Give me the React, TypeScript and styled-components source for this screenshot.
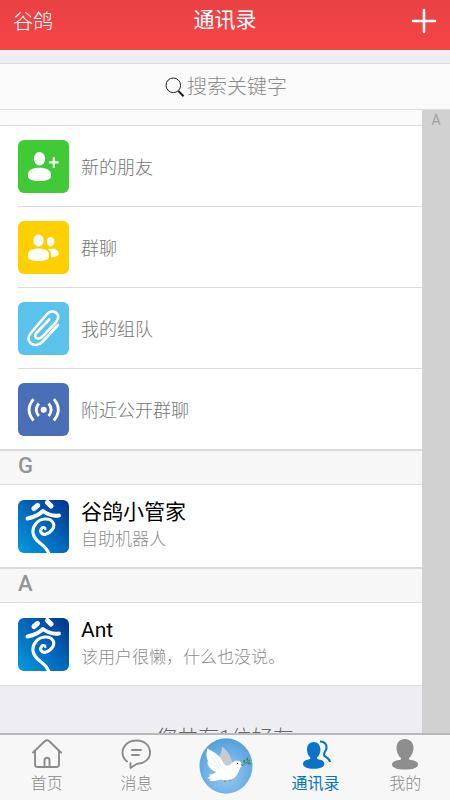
import React from "react";
import styled, { createGlobalStyle } from "styled-components";

const GlobalStyle = createGlobalStyle`
  * { box-sizing: border-box; }
  body {
    margin: 0;
    background: #eeedf2;
    font-family: Roboto, "Noto Sans CJK SC", sans-serif;
    font-weight: 300;
  }
  h1, h2, p, ul { margin: 0; padding: 0; font-weight: inherit; }
  ul { list-style: none; }
  button, input { font: inherit; border: 0; padding: 0; background: none; color: inherit; }
  button { cursor: pointer; }
  svg { display: block; flex: none; }
`;

const Screen = styled.div`
  height: 100vh;
  display: flex;
  flex-direction: column;
  overflow: hidden;
`;

const Header = styled.header`
  flex: none;
  height: 50px;
  padding: 0 13px 10px;
  display: grid;
  grid-template-columns: 1fr auto 1fr;
  align-items: center;
  color: #fff;
  background: linear-gradient(#e94144, #f44546);
`;

const Brand = styled.span`
  font-size: 20px;
  line-height: 24px;
  padding-top: 4px;
`;

const Title = styled.h1`
  font-size: 21px;
  line-height: 24px;
  font-weight: 400;
`;

const AddButton = styled.button`
  justify-self: end;
  padding-top: 2px;
`;

const SearchBar = styled.label`
  flex: none;
  height: 47px;
  margin-top: 13px;
  padding-left: 4px;
  display: flex;
  align-items: center;
  justify-content: center;
  gap: 2px;
  background: #fafafa;
  border-top: 1px solid #dcdbe0;
  border-bottom: 1px solid #dcdcdc;
`;

const SearchInput = styled.input`
  width: 102px;
  height: 30px;
  font-size: 20px;
  color: #8c8c8c;
  outline: 0;
  &::placeholder { color: #8c8c8c; opacity: 1; }
`;

const Body = styled.div`
  flex: 1;
  min-height: 0;
  display: flex;
`;

const Main = styled.main`
  flex: 1;
  min-width: 0;
  overflow: hidden;
`;

const IndexBar = styled.nav`
  flex: none;
  width: 28px;
  text-align: center;
  background: #d1d1d1;
`;

const IndexLink = styled.a`
  font-size: 14px;
  line-height: 20px;
  font-weight: 400;
  color: #a0a0a0;
  text-decoration: none;
  display: block;
`;

const ListTop = styled.div`
  height: 16px;
  background: #fafafa;
  border-bottom: 1px solid #dcdcdc;
`;

const List = styled.ul`
  background: #fff;
`;

const MenuItem = styled.li`
  margin-left: 18px;
  &:not(:last-child) { border-bottom: 1px solid #dcdcdc; }
`;

const MenuButton = styled.button`
  width: 100%;
  height: 80px;
  display: flex;
  align-items: center;
  gap: 12px;
  text-align: left;
  font-size: 18px;
  color: #757575;
`;

const IconTile = styled.span<{ $color: string }>`
  width: 51px;
  height: 53px;
  border-radius: 6px;
  background: ${(p) => p.$color};
  overflow: hidden;
`;

const SectionHead = styled.h2`
  height: 36px;
  padding-left: 18px;
  font-size: 22px;
  line-height: 30px;
  font-weight: 500;
  color: #959595;
  background: #f7f7f7;
  border-top: 2px solid #dadada;
  border-bottom: 1px solid #dcdcdc;
`;

const Contact = styled.li`
  height: 82px;
  padding-left: 18px;
  display: flex;
  align-items: center;
  gap: 12px;
`;

const ContactText = styled.div`
  padding-bottom: 3px;
`;

const Name = styled.p`
  font-size: 21px;
  line-height: 28px;
  font-weight: 400;
  color: #000;
`;

const Status = styled.p`
  font-size: 17px;
  line-height: 26px;
  color: #8c8c8c;
`;

const Total = styled.p`
  padding: 38px 0 0 28px;
  border-top: 1px solid #dcdcdc;
  text-align: center;
  font-size: 21px;
  line-height: 28px;
  color: #666;
`;

const TabBar = styled.nav`
  flex: none;
  height: 67px;
  padding-left: 2px;
  display: grid;
  grid-template-columns: repeat(5, 1fr);
  background: #f7f7f7;
  border-top: 2px solid #b9b9bb;
`;

const Tab = styled.a<{ $active?: boolean }>`
  display: flex;
  flex-direction: column;
  align-items: center;
  padding-top: 3px;
  gap: 2px;
  font-size: 16px;
  line-height: 24px;
  color: ${(p) => (p.$active ? "#0a73c5" : "#8a8a8a")};
  font-weight: ${(p) => (p.$active ? 400 : 300)};
  text-decoration: none;
`;

const PlusIcon = () => (
  <svg width="26" height="26" viewBox="0 0 26 26" stroke="#fff" strokeWidth="2.6" strokeLinecap="round" aria-hidden="true">
    <path d="M13 2v22M2 13h22" />
  </svg>
);

const SearchIcon = () => (
  <svg width="20" height="20" viewBox="0 0 20 20" fill="none" stroke="#222" aria-hidden="true">
    <circle cx="8.3" cy="8.3" r="7.3" strokeWidth="1" />
    <path d="M13.4 14L18.6 19.2" strokeWidth="2" />
  </svg>
);

const FriendIcon = () => (
  <svg width="51" height="53" viewBox="0 0 51 53" fill="#fff" aria-hidden="true">
    <ellipse cx="21.5" cy="18.8" rx="5.7" ry="6.7" />
    <path d="M10 34.5c0-4.6 4.2-6.8 11.3-6.8S33 29.9 33 34.5v1.7c0 3-4 4.8-11.7 4.8S10 39.2 10 36.2z" />
    <path d="M31 22.3h9.6M35.8 17.3v10.4" stroke="#fff" strokeWidth="2.2" />
  </svg>
);

const GroupIcon = () => (
  <svg width="51" height="53" viewBox="0 0 51 53" fill="#fff" aria-hidden="true">
    <ellipse cx="20.5" cy="19.5" rx="5.2" ry="6" />
    <ellipse cx="32.6" cy="20.7" rx="3.8" ry="4.8" />
    <path d="M10 34c0-4.3 4-6.4 10.5-6.4S31 29.7 31 34v1.4c0 2.8-3.6 4.5-10.5 4.5S10 38.2 10 35.4z" />
    <path d="M31 28c5.6-1 9.7.8 9.7 4.6 0 2.3-2.7 3.7-7.5 3.6.3-3.5-.1-6-3.4-7.6z" />
  </svg>
);

const ClipIcon = () => (
  <svg width="51" height="53" viewBox="0 0 51 53" fill="none" stroke="#fff" strokeWidth="2.6" strokeLinecap="round" strokeLinejoin="round" aria-hidden="true">
    <path d="M40 23L24.8 39.5C16.500 47.500 6 40 12.500 31.500L28.300 12.800C34.800 5.200 44.300 12.300 38.300 19.800L24.300 34.700C20.300 38.700 14.700 35.500 18.300 31L31.300 17.500" />
  </svg>
);

const NearbyIcon = () => (
  <svg width="51" height="53" viewBox="0 0 51 53" fill="none" stroke="#fff" strokeWidth="2.8" aria-hidden="true">
    <circle cx="25.7" cy="26.7" r="3" fill="#fff" stroke="none" />
    <path d="M20.800 20.500Q15.700 26.700 20.800 33M30.600 20.500Q35.700 26.700 30.600 33" />
    <path d="M15.500 16.200Q6.700 26.700 15.500 37.500M35.900 16.200Q44.700 26.700 35.900 37.500" />
  </svg>
);

const Avatar = ({ id }: { id: string }) => (
  <svg width="51" height="53" viewBox="0 0 51 53" fill="none" stroke="#fff" strokeLinecap="round" role="img" aria-label="谷鸽">
    <defs>
      <linearGradient id={id} x1="0" y1="1" x2="1" y2="0">
        <stop offset="0" stopColor="#039bdf" />
        <stop offset=".55" stopColor="#0063b6" />
        <stop offset="1" stopColor="#003488" />
      </linearGradient>
      <clipPath id={`${id}-clip`}><rect width="51" height="53" rx="6" /></clipPath>
    </defs>
    <g clipPath={`url(#${id}-clip)`}>
      <rect width="51" height="53" fill={`url(#${id})`} stroke="none" />
      <path d="M16 8.500L19.500 5.500" strokeWidth="5" />
      <path d="M29.500 2.500L33 6" strokeWidth="5" />
      <path d="M9.500 18.500C16.500 17 22 14 25 11C29 14 35 16.500 41 15.500" strokeWidth="3.900" strokeLinejoin="round" />
      <path d="M24 28C21 31 23.500 35.200 27.500 34.200C33.500 32.700 37.500 27 35 22.500C32 17.500 22.500 17.800 18 23.500C13 29.500 14.500 36.500 19.500 41C24 45 29 47 31 54" strokeWidth="3.100" />
      <path d="M24 28C25.500 26.500 27.500 27.500 27.300 29" strokeWidth="2.400" />
    </g>
  </svg>
);

const HomeIcon = () => (
  <svg width="34" height="32" viewBox="0 0 34 32" fill="none" stroke="#8b8b8b" strokeWidth="1.9" strokeLinecap="round" strokeLinejoin="round" aria-hidden="true">
    <path d="M3 14.500L14.700 3.200Q17 1.200 19.300 3.200L31 14.500" />
    <path d="M5 13v13.500q0 2.500 2.500 2.500h19q2.500 0 2.500-2.500V13" />
    <path d="M14.500 29v-6.500q0-2.700 2.500-2.700t2.500 2.700V29" />
  </svg>
);

const MessageIcon = () => (
  <svg width="34" height="32" viewBox="0 0 34 32" fill="none" stroke="#8b8b8b" strokeWidth="1.9" strokeLinecap="round" strokeLinejoin="round" aria-hidden="true">
    <path d="M8 23.500C4.500 20.800 3.500 18 3.500 14.800C3.500 7.500 9.500 2.500 17.500 2.500S31 7.500 31 14.500S24.500 26 17.500 26L11.500 30V25.300" />
    <path d="M13 12h9M13 17h7" />
  </svg>
);

const ContactsIcon = () => (
  <svg width="34" height="32" viewBox="0 0 34 32" fill="#0a73c5" aria-hidden="true">
    <path d="M14.700 4c4 0 6.700 3.100 6.700 7.600 0 3.400-1.300 6.300-3.200 7.700-.6 1.300.2 1.900 1.800 2.200 3.400.6 5.400 2 5.400 4.200 0 3.300-4.300 5-10.700 5S4 29 4 25.700c0-2.200 2-3.600 5.400-4.200 1.600-.3 2.400-.9 1.800-2.200C9.300 17.900 8 15 8 11.600 8 7.100 10.700 4 14.700 4z" />
    <path d="M21 3.500C25.300 3.300 28 6.300 27.500 10.300C27 13.200 24.500 14.500 25 17C25.400 19.300 30.300 19.300 31 24" fill="none" stroke="#0a73c5" strokeWidth="2.1" />
  </svg>
);

const ProfileIcon = () => (
  <svg width="34" height="32" viewBox="0 0 34 32" fill="#8e8e8e" aria-hidden="true">
    <path d="M17 1c5.100 0 8.500 3.500 8.500 8.700 0 4.300-1.600 8-4.200 10-.9 1.400-.2 2.100 1.700 2.400 4.500.7 7 2.100 7 4.300 0 3.200-5.100 5.200-13 5.200S4 29.600 4 26.400c0-2.200 2.500-3.600 7-4.300 1.900-.3 2.600-1 1.700-2.400-2.600-2-4.200-5.700-4.200-10C8.500 4.500 11.900 1 17 1z" />
  </svg>
);

const DoveIcon = () => (
  <svg width="54" height="56" viewBox="0 0 54 56" aria-hidden="true">
    <defs>
      <radialGradient id="sky" cx=".5" cy=".65" r=".65">
        <stop offset="0" stopColor="#9bcdf0" />
        <stop offset="1" stopColor="#529fdc" />
      </radialGradient>
    </defs>
    <ellipse cx="27" cy="28" rx="26.5" ry="27.7" fill="url(#sky)" />
    <path d="M20 20C22 15 23 12 23 8.500C28 12 33 19 33.500 27L25 29z" fill="#c6cbd0" />
    <path d="M33 25C36 21.500 41 21.500 42.500 25.500L43 28.500C41 29 40.500 32 38.500 36C36 41 29 43.500 22 41.500C18 43 14 43.500 10 42.500L12 41L8 40L11.500 38L9.500 36.500C13 36.500 15 36 17 34C11 32 7 26 9 23C7.500 20 7 16 8 12C8 10 9.500 10 10.500 12C16 14 21 18 24 24C26 28 29 29.500 33 25z" fill="#fff" />
    <path d="M10 15L20 30M9 23L20 31M16 18L23 30" stroke="#dce7f0" strokeWidth=".7" />
    <circle cx="38.5" cy="25.5" r=".7" fill="#26384c" />
    <path d="M41.500 26l3 .5-2.500 1.500zM26 42l-1.500 2.300 3-.3M31 41.500l-1 2 2.500-.5" fill="#c77983" />
    <path d="M43 28C45 26 47 25 51 22" stroke="#40833f" strokeWidth=".9" fill="none" />
    <path d="M45 25Q43 22 46 21.500Q47 24 45 25zM48 23Q46 20 49 19.500Q50 22 48 23zM48 25Q51 23 52 26Q49 27 48 25z" fill="#40833f" />
  </svg>
);

const menu = [
  { label: "新的朋友", color: "#40cb36", Icon: FriendIcon },
  { label: "群聊", color: "#ffd000", Icon: GroupIcon },
  { label: "我的组队", color: "#5bc3eb", Icon: ClipIcon },
  { label: "附近公开群聊", color: "#4b6fb7", Icon: NearbyIcon },
];

const groups = [
  { letter: "G", name: "谷鸽小管家", status: "自助机器人" },
  { letter: "A", name: "Ant", status: "该用户很懒，什么也没说。" },
];

export default function App() {
  return (
    <Screen lang="zh-CN">
      <GlobalStyle />
      <Header>
        <Brand>谷鸽</Brand>
        <Title>通讯录</Title>
        <AddButton type="button" aria-label="添加"><PlusIcon /></AddButton>
      </Header>
      <SearchBar>
        <SearchIcon />
        <SearchInput type="text" placeholder="搜索关键字" aria-label="搜索关键字" />
      </SearchBar>
      <Body>
        <Main>
          <ListTop />
          <List>
            {menu.map(({ label, color, Icon }) => (
              <MenuItem key={label}>
                <MenuButton type="button">
                  <IconTile $color={color}><Icon /></IconTile>
                  {label}
                </MenuButton>
              </MenuItem>
            ))}
          </List>
          {groups.map((g) => (
            <section key={g.letter} id={g.letter}>
              <SectionHead>{g.letter}</SectionHead>
              <List>
                <Contact>
                  <Avatar id={`avatar-${g.letter}`} />
                  <ContactText>
                    <Name>{g.name}</Name>
                    <Status>{g.status}</Status>
                  </ContactText>
                </Contact>
              </List>
            </section>
          ))}
          <Total>您共有1位好友</Total>
        </Main>
        <IndexBar aria-label="索引"><IndexLink href="#A">A</IndexLink></IndexBar>
      </Body>
      <TabBar>
        <Tab href="#home"><HomeIcon />首页</Tab>
        <Tab href="#messages"><MessageIcon />消息</Tab>
        <Tab href="#dove" aria-label="谷鸽"><DoveIcon /></Tab>
        <Tab href="#contacts" $active aria-current="page"><ContactsIcon />通讯录</Tab>
        <Tab href="#me"><ProfileIcon />我的</Tab>
      </TabBar>
    </Screen>
  );
}
